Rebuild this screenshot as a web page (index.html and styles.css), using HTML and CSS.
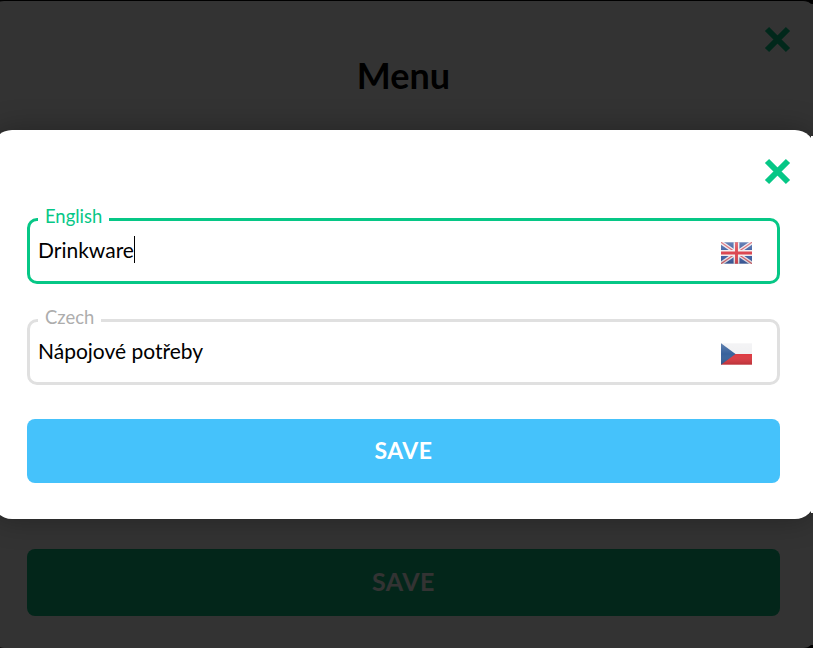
FILE: index.html
```html
<!DOCTYPE html>
<html lang="en">
<head>
    <meta charset="UTF-8">
    <meta name="viewport" content="width=device-width, initial-scale=1.0">
    <title>Menu</title>
    <link rel="stylesheet" href="styles.css">
</head>
<body>

    <div class="screen">
        <!-- Page behind the dialog -->
        <div class="menu-page">
            <div class="menu-close">
                <svg class="close-icon" viewBox="0 0 27 27"><path d="M3 3 24 24M24 3 3 24"/></svg>
            </div>
            <h1>Menu</h1>
            <button class="menu-save" type="button">SAVE</button>
        </div>

        <div class="backdrop"></div>

        <!-- Translation dialog -->
        <div class="sheet">
            <div class="sheet-close">
                <svg class="close-icon" viewBox="0 0 27 27"><path d="M3 3 24 24M24 3 3 24"/></svg>
            </div>

            <fieldset class="lang-field active">
                <legend>English</legend>
                <div class="lang-row">
                    <div class="lang-value"><span class="typed">Drinkware</span></div>
                    <svg class="flag" viewBox="0 0 32 22">
                        <defs>
                            <linearGradient id="glossUk" x1="0" y1="0" x2="0" y2="1">
                                <stop offset="0" stop-color="#fff" stop-opacity="0.22"/>
                                <stop offset="0.5" stop-color="#fff" stop-opacity="0"/>
                                <stop offset="1" stop-color="#000" stop-opacity="0.14"/>
                            </linearGradient>
                        </defs>
                        <rect width="32" height="22" fill="#3f5fa3"/>
                        <path d="M0 0 32 22M32 0 0 22" stroke="#ece8ee" stroke-width="4"/>
                        <path d="M0 0 32 22M32 0 0 22" stroke="#d9606a" stroke-width="1.3"/>
                        <path d="M16 0V22M0 11H32" stroke="#f2eeef" stroke-width="6"/>
                        <path d="M16 0V22M0 11H32" stroke="#dc4650" stroke-width="3"/>
                        <rect width="32" height="22" fill="url(#glossUk)"/>
                    </svg>
                </div>
            </fieldset>

            <fieldset class="lang-field">
                <legend>Czech</legend>
                <div class="lang-row">
                    <div class="lang-value">Nápojové potřeby</div>
                    <svg class="flag" viewBox="0 0 32 22">
                        <defs>
                            <linearGradient id="glossCz" x1="0" y1="0" x2="0" y2="1">
                                <stop offset="0" stop-color="#fff" stop-opacity="0.2"/>
                                <stop offset="0.5" stop-color="#fff" stop-opacity="0"/>
                                <stop offset="1" stop-color="#000" stop-opacity="0.16"/>
                            </linearGradient>
                        </defs>
                        <rect width="32" height="11" fill="#f1f1f3"/>
                        <rect y="11" width="32" height="11" fill="#dd3a42"/>
                        <path d="M0 0 15 11 0 22Z" fill="#38629c"/>
                        <rect width="32" height="22" fill="url(#glossCz)"/>
                    </svg>
                </div>
            </fieldset>

            <button class="sheet-save" type="button">SAVE</button>
        </div>
    </div>

</body>
</html>
```

FILE: styles.css
```css
/* Reset */
body, html {
    margin: 0;
    padding: 0;
    background-color: #000000;
    font-family: "Lato", "Open Sans", sans-serif;
}

.screen {
    position: relative;
    width: 813px;
    height: 648px;
    overflow: hidden;
}

/* Page behind the dialog, a little wider than the window */
.menu-page {
    position: relative;
    width: 823px;
    height: 648px;
    margin-left: -8px;
    box-sizing: border-box;
    padding: 25px 24px 32px 35px;
    background-color: #ffffff;
    border-top: 1px solid #000000;
    border-radius: 12px;
    display: flex;
    flex-direction: column;
}

/* Sliver at the right edge of the window */
.menu-page::after {
    content: "";
    position: absolute;
    top: 3px;
    bottom: 3px;
    left: 819px;
    width: 4px;
    background-color: #ffffff;
}

.menu-close {
    display: flex;
    justify-content: flex-end;
    height: 27px;
}

.menu-page h1 {
    margin: 1px 11px 0 0;
    font-size: 36px;
    line-height: 42px;
    font-weight: bold;
    color: #000000;
    text-align: center;
}

.menu-save {
    margin-top: auto;
    margin-right: 11px;
    padding-bottom: 4px;
    height: 67px;
    border: none;
    border-radius: 8px;
    background-color: #0fbe82;
    color: #ffffff;
    font-family: inherit;
    font-size: 25px;
    font-weight: bold;
    letter-spacing: 0.5px;
}

.backdrop {
    position: absolute;
    top: 0;
    right: 0;
    bottom: 0;
    left: 0;
    background-color: rgba(0, 0, 0, 0.8);
}

/* Dialog */
.sheet {
    position: absolute;
    top: 130px;
    left: -8px;
    width: 823px;
    height: 389px;
    box-sizing: border-box;
    padding: 28px 35px 0 35px;
    background-color: #ffffff;
    border-radius: 20px;
    box-shadow: 0 0 30px rgba(0, 0, 0, 0.3);
    display: flex;
    flex-direction: column;
}

.sheet::after {
    content: "";
    position: absolute;
    top: 6px;
    bottom: 6px;
    left: 819px;
    width: 4px;
    background-color: #ffffff;
}

.sheet-close {
    display: flex;
    justify-content: flex-end;
    height: 27px;
    margin-right: -11px;
    margin-bottom: 24px;
}

.close-icon {
    display: block;
    width: 27px;
    height: 27px;
    fill: none;
    stroke: #06c786;
    stroke-width: 6;
}

.lang-field {
    margin: 0 0 26px 0;
    padding: 6px 8px 0 8px;
    height: 75px;
    box-sizing: border-box;
    border: 3px solid #e0e0e0;
    border-radius: 10px;
}

/* Label sits a little above the border line */
.lang-field legend {
    padding: 0 7px 6px 7px;
    font-size: 18.4px;
    line-height: 15px;
    color: #adadad;
}

.lang-field.active {
    border-color: #06c786;
}

.lang-field.active legend {
    color: #06c786;
}

.lang-row {
    display: flex;
    align-items: center;
}

.lang-value {
    flex-grow: 1;
    font-size: 21px;
    line-height: 28px;
    color: #000000;
}

.typed {
    display: inline-block;
    line-height: 27px;
    border-right: 1px solid #000000;
}

.flag {
    width: 31px;
    height: 22px;
    margin-top: 5px;
    margin-right: 17px;
    filter: blur(0.4px);
}

.sheet-save {
    margin-top: 8px;
    padding-bottom: 3px;
    height: 64px;
    border: none;
    border-radius: 8px;
    background-color: #45c2fb;
    color: #ffffff;
    font-family: inherit;
    font-size: 23px;
    font-weight: bold;
    letter-spacing: 0.5px;
}
```
